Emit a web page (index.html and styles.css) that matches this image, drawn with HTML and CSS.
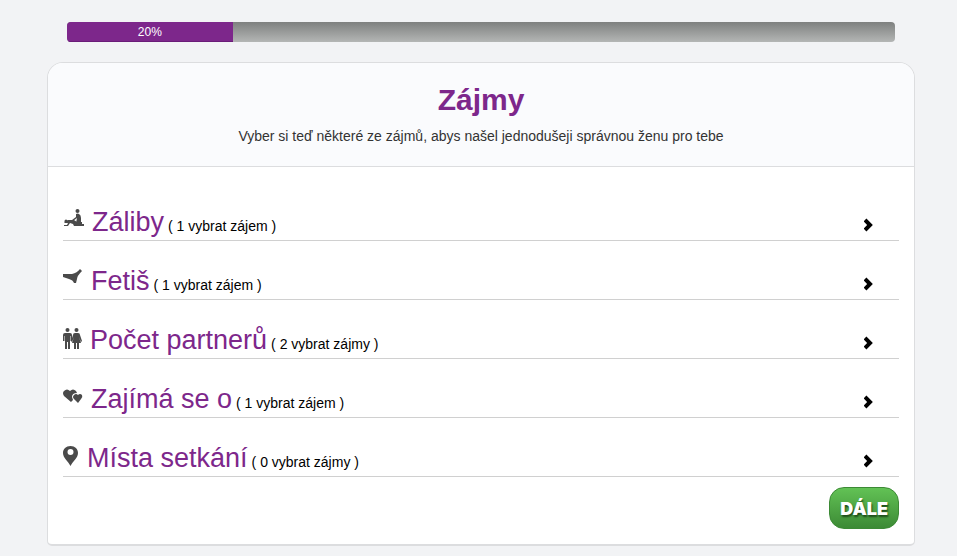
FILE: index.html
```
<!DOCTYPE html>
<html lang="cs">
<head>
    <meta charset="UTF-8">
    <meta name="viewport" content="width=device-width, initial-scale=1.0">
    <title>Zájmy</title>
    <link rel="stylesheet" href="styles.css">
</head>
<body>
    <div class="container">
        <div class="progress">
            <div class="progress-bar" style="width: 20%">20%</div>
        </div>
        <div class="panel">
            <div class="panel-header">
                <h1>Zájmy</h1>
                <p>Vyber si teď některé ze zájmů, abys našel jednodušeji správnou ženu pro tebe</p>
            </div>
            <form class="panel-body">
                <a class="category" href="#zaliby">
                    <svg class="icon" width="21" height="20" viewBox="0 0 21 20">
                        <circle cx="14.500" cy="2" r="2"/>
                        <path d="M13 5q2-1 3 0 2 1 2 4v5h-5l1-5-4 3-1-1 4-3z"/>
                        <path d="M5 11l6 0 3 2h5v2h2v2H11l-1-2-3-1-2 3H1v-1h3l1-2-3 0-1-1z"/>
                        <circle cx="3" cy="12" r="1.500"/>
                    </svg>
                    <span class="name">Záliby</span>
                    <span class="count">( 1 vybrat zájem )</span>
                    <svg class="arrow" width="10" height="14" viewBox="0 0 10 14"><path d="M1 2l5 5-5 5"/></svg>
                </a>
                <a class="category" href="#fetis">
                    <svg class="icon" width="20" height="20" viewBox="0 0 20 20">
                        <path d="M0 6l9 0q5-1 8-5l2 2q-5 5-5 8l-1 4-2 0q-1-3-5-4-3-1-6-2z"/>
                    </svg>
                    <span class="name">Fetiš</span>
                    <span class="count">( 1 vybrat zájem )</span>
                    <svg class="arrow" width="10" height="14" viewBox="0 0 10 14"><path d="M1 2l5 5-5 5"/></svg>
                </a>
                <a class="category" href="#partneri">
                    <svg class="icon" width="19" height="23" viewBox="0 0 19 23">
                        <circle cx="4.500" cy="3" r="2"/>
                        <path d="M2 6h5q2 0 2 2v6H7.500V9H7v13H5v-7H4v7H2V9h-.5v5H0V8q0-2 2-2z"/>
                        <circle cx="13.500" cy="3" r="2"/>
                        <path d="M12 6h3q2 0 2 2l2 6-1 1-2-5 2 6h-2v6h-2v-6h-1v6h-2v-6H9l2-6-2 5-1-1 2-6q0-2 2-2z"/>
                    </svg>
                    <span class="name">Počet partnerů</span>
                    <span class="count">( 2 vybrat zájmy )</span>
                    <svg class="arrow" width="10" height="14" viewBox="0 0 10 14"><path d="M1 2l5 5-5 5"/></svg>
                </a>
                <a class="category" href="#zajima">
                    <svg class="icon" width="20" height="20" viewBox="0 0 20 20">
                        <path d="M8 16L1 10Q-1 7 1 5q3-3 6 0 3-3 6 0l1 2q-5 0-5 4l1 3z"/>
                        <path d="M15 17l-4-4q-2-2 0-4 2-2 4 0 2-2 4 0 1 2-1 4z"/>
                    </svg>
                    <span class="name">Zajímá se o</span>
                    <span class="count">( 1 vybrat zájem )</span>
                    <svg class="arrow" width="10" height="14" viewBox="0 0 10 14"><path d="M1 2l5 5-5 5"/></svg>
                </a>
                <a class="category" href="#mista">
                    <svg class="icon" width="16" height="22" viewBox="0 0 16 22">
                        <path fill-rule="evenodd" d="M7.500 1C3 1 0 4 0 8c0 5 5 8 7.500 13C10 16 15 13 15 8c0-4-3-7-7.500-7zM7.500 4a3 3 0 1 1 0 6 3 3 0 0 1 0-6z"/>
                    </svg>
                    <span class="name">Místa setkání</span>
                    <span class="count">( 0 vybrat zájmy )</span>
                    <svg class="arrow" width="10" height="14" viewBox="0 0 10 14"><path d="M1 2l5 5-5 5"/></svg>
                </a>
                <div class="actions">
                    <button type="submit">DÁLE</button>
                </div>
            </form>
        </div>
    </div>
</body>
</html>
```
FILE: styles.css
```
body {
    margin: 0;
    background-color: #f2f3f5;
    font-family: "Liberation Sans", Arial, sans-serif;
    font-size: 14px;
    color: #000;
}
.container {
    margin: 22px 42px 11px 47px;
}
.progress {
    height: 20px;
    margin: 0 20px 20px;
    border-radius: 4px;
    overflow: hidden;
    background: linear-gradient(#7e807f, #b4b6b5);
}
.progress-bar {
    height: 20px;
    line-height: 20px;
    font-size: 12px;
    text-align: center;
    color: #fff;
    background-color: #7d278b;
    box-shadow: inset 0 -1px 0 #6a1c78;
}
.panel {
    border: 1px solid #dcdddf;
    border-bottom-width: 2px;
    border-radius: 16px 16px 5px 5px;
    overflow: hidden;
    background-color: #fff;
}
.panel-header {
    padding: 20px 15px;
    border-bottom: 1px solid #dcdddf;
    background-color: #fafbfd;
    text-align: center;
}
h1 {
    margin: 0 0 10px;
    font-size: 30px;
    line-height: 34px;
    color: #7d278b;
}
.panel-header p {
    margin: 0;
    line-height: 19px;
    color: #333;
}
.panel-body {
    padding: 15px;
}
.category {
    display: flex;
    align-items: baseline;
    height: 34px;
    padding-top: 24px;
    border-bottom: 1px solid #d0d0d0;
    color: #000;
    text-decoration: none;
}
.icon {
    flex-shrink: 0;
    align-self: flex-start;
    margin: 3px 8px 0 0;
    fill: #4a4a4a;
}
.name {
    margin-right: 4px;
    font-size: 27px;
    line-height: 32px;
    color: #7d278b;
}
.arrow {
    align-self: flex-end;
    margin: 0 25px 8px auto;
    fill: none;
    stroke: #000;
    stroke-width: 4;
}
.actions {
    display: flex;
    justify-content: flex-end;
    margin-top: 10px;
}
button {
    height: 42px;
    padding: 0 10px;
    border: 1px solid #3c8a35;
    border-radius: 15px;
    background: linear-gradient(#62c255, #3c8a35);
    color: #fff;
    font-family: Inter, sans-serif;
    font-size: 18px;
    font-weight: 900;
    text-shadow: 1px 2px 2px #1c4a18;
    cursor: pointer;
}
```
